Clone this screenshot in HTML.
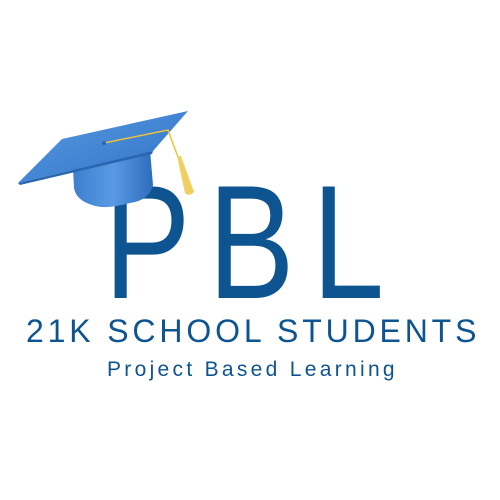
<!DOCTYPE html>
<html><head><style>
body{margin:0;width:500px;height:500px;background:#fff;overflow:hidden;position:relative;font-family:"Liberation Sans",sans-serif;color:#0e5490}
.t{position:absolute;white-space:nowrap;line-height:1}
</style></head><body>
<div class="t" style="left:104px;top:162px;font-size:162px;letter-spacing:22px;transform:scaleX(0.8);transform-origin:0 0">PBL</div>
<div class="t" style="left:26px;top:315px;font-size:32px;letter-spacing:3.85px">21K SCHOOL STUDENTS</div>
<div class="t" style="left:107px;top:359px;font-size:21px;letter-spacing:3.3px">Project Based Learning</div>
<svg width="500" height="500" style="position:absolute;left:0;top:0">
<defs><linearGradient id="g" x1="0" y1="0" x2="1" y2="1"><stop offset="0" stop-color="#5a9ae0"/><stop offset="1" stop-color="#2f72c8"/></linearGradient>
<linearGradient id="s" x1="0" y1="0" x2="1" y2="0"><stop offset="0" stop-color="#3d7fd0"/><stop offset="0.5" stop-color="#5a9ae4"/><stop offset="1" stop-color="#2e6cbc"/></linearGradient></defs>
<path d="M73 168 L150 150 L153 185 Q150 200 130 203 Q105 210 92 205 Q76 200 74 188 Z" fill="url(#s)"/>
<path d="M18 183 L62 139 L188 111 L153 151 Z" fill="url(#g)"/>
<path d="M18 183 L153 151 L152 154 L20 185 Z" fill="#2a66b0"/>
<path d="M104 143 L168 130 L178 157" stroke="#e8c43a" stroke-width="1.5" fill="none"/>
<circle cx="104" cy="143" r="2" fill="#2a66b0"/>
<path d="M177 156 L181 156 L194 192 Q189 197 185 193 Z" fill="#f0d060"/>
</svg>
</body></html>
